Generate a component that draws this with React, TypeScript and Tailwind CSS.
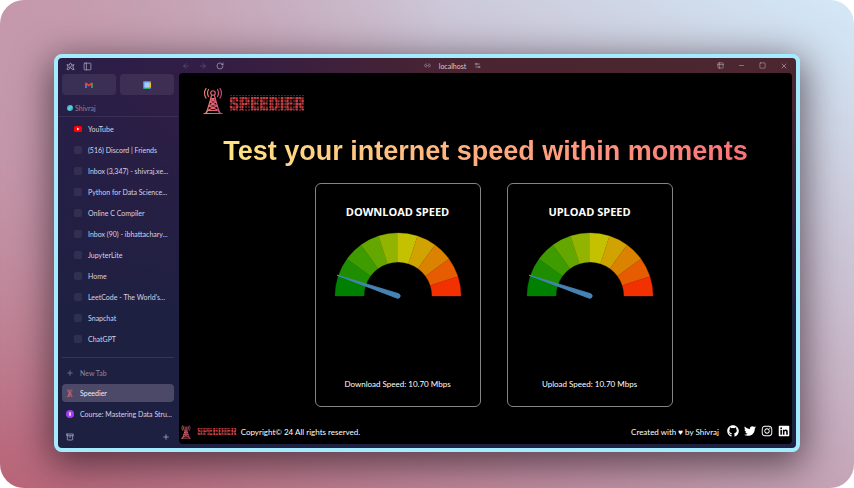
import React from "react";
import {
  ArrowLeft,
  ArrowRight,
  RotateCw,
  Plus,
  Minus,
  X,
  Square,
  PanelLeft,
  Archive,
  Link2,
  Settings2,
  Table2,
} from "lucide-react";
import { FaGithub, FaTwitter, FaInstagram, FaLinkedin } from "react-icons/fa";

const tabs = [
  "YouTube",
  "(516) Discord | Friends",
  "Inbox (3,347) - shivraj.xe...",
  "Python for Data Science...",
  "Online C Compiler",
  "Inbox (90) - ibhattachary...",
  "JupyterLite",
  "Home",
  "LeetCode - The World's...",
  "Snapchat",
  "ChatGPT",
];

const gaugeColors = [
  "#008000",
  "#1e8e00",
  "#3e9b00",
  "#64a700",
  "#92b400",
  "#c4c200",
  "#d0a300",
  "#db8200",
  "#e75c00",
  "#f33000",
];

function point(radius: number, angle: number) {
  return `${64 - radius * Math.cos(angle)} ${64 - radius * Math.sin(angle)}`;
}

function Gauge({ label }: { label: string }) {
  const step = Math.PI / gaugeColors.length;
  return (
    <svg viewBox="0 0 128 68" className="w-32 h-[68px]" role="img" aria-label={label}>
      {gaugeColors.map((color, i) => (
        <path
          key={color}
          d={`M${point(63, i * step)} A63 63 0 0 1 ${point(63, (i + 1) * step)} L${point(34, (i + 1) * step)} A34 34 0 0 0 ${point(34, i * step)}Z`}
          fill={color}
          stroke={color}
          strokeWidth=".3"
        />
      ))}
      <path d="M3 43.2 L64.8 61.7 A2.4 2.4 0 0 1 63.2 66.2Z" fill="#4682b4" stroke="#4682b4" strokeWidth=".9" />
    </svg>
  );
}

function Tower({ className }: { className: string }) {
  return (
    <svg viewBox="0 0 40 54" className={className} fill="none" stroke="url(#tower)" strokeWidth="2.4" strokeLinecap="round" aria-hidden="true">
      <defs>
        <linearGradient id="tower" x1="0" y1="0" x2="40" y2="0" gradientUnits="userSpaceOnUse">
          <stop offset="0" stopColor="#f08a68" />
          <stop offset="1" stopColor="#cf3f83" />
        </linearGradient>
      </defs>
      <circle cx="20" cy="11" r="4.5" />
      <path d="M11 4q-4 7 0 14M6 2q-6 9 0 19M29 4q4 7 0 14M34 2q6 9 0 19" />
      <path d="M17 16 14 28 7 51M23 16l3 12 7 23M16 22h8M14 29h12M12 37h16M9 46h22M2 52h36" />
      <path d="m16 22 10 7M24 22l-10 7M14 29l14 8M26 29l-14 8M12 37l19 9M28 37 9 46l-4 6M31 46l4 6" />
    </svg>
  );
}

const dotGrid =
  "bg-[repeating-linear-gradient(90deg,#000_0_1px,transparent_1px_3px),repeating-linear-gradient(0deg,#000_0_1px,transparent_1px_3px),linear-gradient(#5c1c20,#5c1c20)]";

const wordmark =
  "block bg-[repeating-linear-gradient(90deg,#0006_0_1px,transparent_1px_3px),repeating-linear-gradient(0deg,#0006_0_1px,transparent_1px_3px),linear-gradient(#c83e43,#c83e43)] bg-clip-text text-transparent font-bold font-['Roboto_Condensed','Open_Sans_Condensed','Liberation_Sans',sans-serif]";

function SpeedCard({ title, label }: { title: string; label: string }) {
  return (
    <section className="flex w-[166px] h-56 flex-col items-center rounded-md border border-[#858585] pt-5 pb-4">
      <h2 className="font-['Open_Sans','Noto_Sans',sans-serif] text-[11px] leading-4 font-bold">{title}</h2>
      <div className="mt-3">
        <Gauge label={title} />
      </div>
      <p className="mt-auto text-[8px] leading-3">{label}: 10.70 Mbps</p>
    </section>
  );
}

function Sidebar() {
  return (
    <aside className="flex w-30 shrink-0 flex-col text-[7px] leading-3 text-[#d6d3e6]">
      <div className="flex h-4 items-center gap-2 px-2 text-[#aaa3b9]">
        <button aria-label="Arc menu">
          <svg viewBox="0 0 20 20" className="size-[9px]" fill="none" stroke="currentColor" strokeWidth="1.9" strokeLinejoin="round" aria-hidden="true">
            <path d="M10 2l3 5 5-1-3 5 3 6-5-1-3-4-4 5-4-1 3-5-3-5 5 1zM6 12q5 0 8-5" />
          </svg>
        </button>
        <button aria-label="Toggle sidebar">
          <PanelLeft className="size-[9px]" />
        </button>
      </div>
      <div className="grid h-[21px] shrink-0 grid-cols-2 gap-1 px-1">
        <button aria-label="Gmail" className="flex items-center justify-center rounded bg-white/8">
          <svg viewBox="0 0 16 12" className="w-2 h-1.5" fill="none" strokeWidth="3.4" aria-hidden="true">
            <path d="M2 12V2" stroke="#4285f4" />
            <path d="M14 12V2" stroke="#34a853" />
            <path d="m1 2 7 5 7-5" stroke="#ea4335" />
          </svg>
        </button>
        <button aria-label="Calendar" className="flex items-center justify-center rounded bg-white/8">
          <svg viewBox="0 0 16 16" className="size-2" aria-hidden="true">
            <rect width="16" height="16" rx="2" fill="#4285f4" />
            <path d="M13 3h3v10h-3z" fill="#fbbc04" />
            <path d="M3 13h10v3H3z" fill="#34a853" />
            <path d="M3 3h10v10H3z" fill="#cfe1ff" />
            <path d="M5 5h2v2H5zM9 5h2v2H9zM5 9h2v2H5zM9 9h2v2H9z" fill="#4285f4" />
          </svg>
        </button>
      </div>
      <div className="flex h-[22px] shrink-0 items-center gap-0.5 border-b border-white/8 pt-1 pl-[9px] text-[#8d849e]">
        <span className="size-1.5 rounded-full bg-linear-to-br from-[#3b82e8] via-[#5fd7c8] to-[#238ac0]" />
        Shivraj
      </div>
      <nav aria-label="Pinned tabs" className="pt-px">
        {tabs.map((tab, i) => (
          <a key={tab} href="#" className="flex h-[21px] items-center gap-1.5 pl-4">
            {i === 0 ? (
              <svg viewBox="0 0 16 12" className="w-2 h-1.5" aria-hidden="true">
                <rect width="16" height="12" rx="3" fill="#f00" />
                <path d="m6 3 5 3-5 3z" fill="#fff" />
              </svg>
            ) : (
              <span className="size-2 rounded-xs bg-white/7" />
            )}
            <span className="whitespace-nowrap">{tab}</span>
          </a>
        ))}
      </nav>
      <hr className="mx-1 mt-2 border-white/10" />
      <button className="mt-1 flex h-[22px] items-center gap-1.5 pl-2 text-[#8b88a0]">
        <Plus className="size-2" />
        New Tab
      </button>
      <a href="#" aria-current="page" className="mx-1 flex h-[18px] items-center gap-1.5 rounded bg-[#4b4967] pl-1 text-[#eeeaf5]">
        <Tower className="h-2 w-2" />
        Speedier
      </a>
      <a href="#" className="flex h-6 items-center gap-1.5 pl-2 whitespace-nowrap">
        <span className="flex size-2 items-center justify-center rounded-full bg-[#a43cf0]">
          <span className="h-1 w-0.5 rounded-full bg-[#e9c9ff]" />
        </span>
        Course: Mastering Data Stru...
      </a>
      <div className="mt-auto flex h-[22px] items-center justify-between px-2 text-[#c1bed1]">
        <button aria-label="Archive">
          <Archive className="size-2" />
        </button>
        <button aria-label="Add">
          <Plus className="size-2" />
        </button>
      </div>
    </aside>
  );
}

export default function App() {
  return (
    <div className="bg-white">
      <div className="flex min-h-screen rounded-3xl bg-[radial-gradient(circle_at_top_left,#c498aa,transparent_45%),linear-gradient(to_top_right,#b96478,#c4a5b7_50%,#d3e9f8)] px-[54px] pt-[54px] pb-9 font-['Lato','Noto_Sans',sans-serif]">
        <div className="flex flex-1 rounded-lg border-4 border-[#a3ebfd] bg-[linear-gradient(to_bottom,transparent_4%,#1e2042_65%),linear-gradient(to_right,#291e47,#321d45_20%,#4a2431_55%,#4c2730)] shadow-[0_9px_36px_4px_rgba(25,12,22,0.6)]">
          <Sidebar />
          <div className="flex min-w-0 flex-1 flex-col pr-1 pb-1 pl-px">
            <header className="flex h-[15px] shrink-0 items-center justify-between pl-[3px] text-[7px] leading-3 text-[#d5c9d4]">
              <div className="flex items-center gap-[9px] text-[#6a5475]">
                <button aria-label="Back"><ArrowLeft className="size-2" /></button>
                <button aria-label="Forward"><ArrowRight className="size-2" /></button>
                <button aria-label="Reload"><RotateCw className="size-2 text-[#b4a9bd]" /></button>
              </div>
              <div className="flex items-center gap-2">
                <Link2 className="size-[7px] text-[#a596a5]" />
                localhost
                <Settings2 className="size-[7px] text-[#b6a5ae]" />
              </div>
              <div className="flex items-center gap-[14px] pr-1 pl-9 text-[#b6a5ae]">
                <button aria-label="Extensions"><Table2 className="size-[7px]" /></button>
                <button aria-label="Minimize"><Minus className="size-[7px]" /></button>
                <button aria-label="Maximize"><Square className="size-[7px]" /></button>
                <button aria-label="Close"><X className="size-2" /></button>
              </div>
            </header>
            <div className="flex flex-1 flex-col rounded-sm bg-black text-white">
              <div className="flex items-center gap-1.5 pt-[14px] pl-6">
                <Tower className="h-7 w-5" />
                <span className={`mt-1 h-[17px] ${dotGrid}`}>
                  <span className={`text-[19px] leading-[17px] ${wordmark}`}>SPEEDIER</span>
                </span>
              </div>
              <h1 className="mx-auto mt-5 bg-linear-to-r from-[#ffe484] to-[#fb7178] bg-clip-text font-['Liberation_Sans',Arial,sans-serif] text-[27px] leading-8 font-bold text-transparent">
                Test your internet speed within moments
              </h1>
              <main className="mt-4 flex justify-center gap-[26px] pl-4">
                <SpeedCard title="DOWNLOAD SPEED" label="Download Speed" />
                <SpeedCard title="UPLOAD SPEED" label="Upload Speed" />
              </main>
              <footer className="mt-auto flex h-6 items-center justify-between px-0.5 text-[8px] leading-3">
                <div className="flex items-center gap-1">
                  <Tower className="mr-0.5 h-[14px] w-[10px]" />
                  <span className={dotGrid}>
                    <span className={`text-[10px] leading-2 ${wordmark}`}>SPEEDIER</span>
                  </span>
                  <span>Copyright© 24 All rights reserved.</span>
                </div>
                <div className="flex items-center">
                  <span className="mr-2">Created with ♥ by Shivraj</span>
                  <div className="flex gap-[5px] pb-0.5">
                    <a href="#" aria-label="GitHub"><FaGithub className="size-3" /></a>
                    <a href="#" aria-label="Twitter"><FaTwitter className="size-3" /></a>
                    <a href="#" aria-label="Instagram"><FaInstagram className="size-3" /></a>
                    <a href="#" aria-label="LinkedIn"><FaLinkedin className="size-3" /></a>
                  </div>
                </div>
              </footer>
            </div>
          </div>
        </div>
      </div>
    </div>
  );
}
